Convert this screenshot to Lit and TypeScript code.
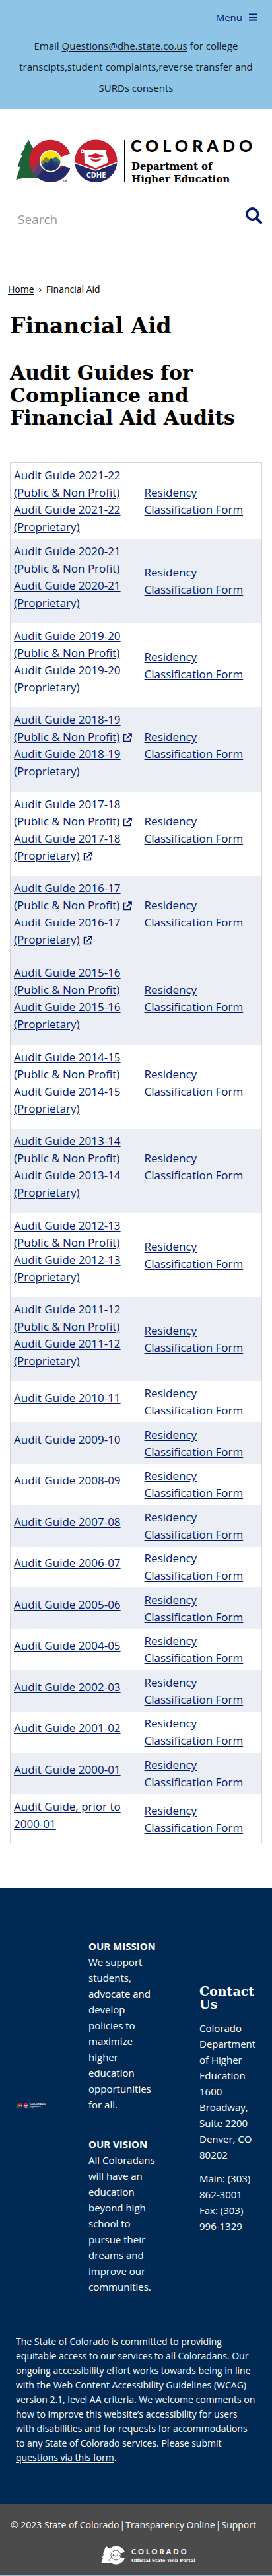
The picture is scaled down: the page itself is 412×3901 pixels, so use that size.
import { LitElement, html, css, svg, nothing } from "lit";
import { customElement } from "lit/decorators.js";

interface GuideRow {
  year: string;
  /** Number of links that lead off the site, counted from the first. */
  external?: number;
  raised?: boolean;
}

const detailedRows: GuideRow[] = [
  { year: "2021-22" },
  { year: "2020-21" },
  { year: "2019-20" },
  { year: "2018-19", external: 1, raised: true },
  { year: "2017-18", external: 2, raised: true },
  { year: "2016-17", external: 2, raised: true },
  { year: "2015-16", raised: true },
  { year: "2014-15", raised: true },
  { year: "2013-14", raised: true },
  { year: "2012-13" },
  { year: "2011-12" },
];

const shadedYears = new Set([
  "2020-21", "2018-19", "2016-17", "2015-16", "2013-14", "2011-12",
  "2009-10", "2007-08", "2005-06", "2002-03", "2000-01",
]);

const simpleYears = [
  "2010-11", "2009-10", "2008-09", "2007-08", "2006-07",
  "2005-06", "2004-05", "2002-03", "2001-02", "2000-01",
];

const externalIcon = html`<svg class="ext" viewBox="0 0 14 14" role="img" aria-label="external link">
  <path d="M5.500 2.500H1.500V12.500H11.500V8.500" fill="none" stroke="currentColor" stroke-width="1.500" />
  <path d="M8 1.200H13V6.200M12.600 1.600L5.500 8.600" fill="none" stroke="currentColor" stroke-width="1.700" />
</svg>`;

const treePath =
  "M19.500 1L12.300 11.700L14 12L7 23.500L10.300 23L5 34L3 42.500L6.700 41.300L0.300 61C14 57 26 59 38 59L36 20L25 12Z";
const cPath =
  "M82.300 21.500A32 32 0 1 0 82.300 44L66.500 38.500A15 15 0 1 1 66.500 27Z";

const stateMark = svg`
  <clipPath id="c-shape"><path d=${cPath} /></clipPath>
  <clipPath id="c-core"><circle cx="52.700" cy="32.700" r="14.800" /></clipPath>
  <path d=${treePath} fill="#1f6238" />
  <path d=${cPath} fill="#c8202f" />
  <g clip-path="url(#c-shape)">
    <path d="M20 58L36 37L42 42L54 50L90 32V70H20Z" fill="#232a68" />
    <path d="M18 52L36 32L40 36L23 57Z" fill="#7e3b5c" />
    <path d="M23 57L40 36L44 42L29 61Z" fill="#4e4275" />
  </g>
  <circle cx="52.700" cy="32.700" r="16.800" fill="#fff" />
  <g clip-path="url(#c-core)">
    <path d="M36 16H70V50H36Z" fill="#fde100" />
    <path d="M36 37L46 26L53 33L60 26L70 36V50H36Z" fill="#82883a" />
    <path d="M54 31L60.500 26L70 36V42H60Z" fill="#35697c" />
    <path d="M36 42L45 34L48 36L53.500 28L59 35L61 33L70 42V50H36Z" fill="#1d3f75" />
    <path d="M38 47L53 36L68 47V50H38Z" fill="#232a68" />
  </g>`;

const agencyLogo = (ink: string, trademark = false) => html`<svg class="agency" viewBox="0 0 364 67" role="img" aria-label="Colorado Department of Higher Education">
  ${stateMark}
  ${trademark
    ? svg`<text x="71" y="64" font-family="Lato, sans-serif" font-size="4" font-weight="700" fill=${ink}>TM</text>`
    : nothing}
  <clipPath id="badge"><circle cx="121.300" cy="32.700" r="32.200" /></clipPath>
  <g clip-path="url(#badge)">
    <path d="M88 0H154V66H88Z" fill="#c8202f" />
    <path d="M88 35L121 47L155 34V66H88Z" fill="#232a68" />
    <path d="M88 35.500L121 47L155 34.500" fill="none" stroke="#fff" stroke-width="1.600" />
  </g>
  <path d="M102 16H137.500L136.500 20L140.500 35L121 43.500L104 36L103.500 20Z" fill="#fff" />
  <circle cx="101" cy="17.700" r="2" fill="none" stroke="#fff" stroke-width="1.200" />
  <path d="M108.500 25L121 21L133.500 25L121 29Z" fill="#c8202f" />
  <path d="M113.500 29C118 31 124 31 128.500 29V31C126 35 116 35 113.500 31Z" fill="#c8202f" />
  <text x="121.500" y="58" text-anchor="middle" font-family="'Noto Sans', sans-serif" font-size="11" font-weight="700" fill="#fff">CDHE</text>
  <path d="M164.500 1V65" stroke=${ink} stroke-width="1" />
  <text x="174" y="19" font-family="Lato, sans-serif" font-size="25" font-weight="900" letter-spacing="6" fill=${ink}>COLORADO</text>
  <text x="175" y="46" font-family="'DejaVu Serif', serif" font-size="15" font-weight="700" fill=${ink}>Department of</text>
  <text x="175" y="65" font-family="'DejaVu Serif', serif" font-size="15" font-weight="700" fill=${ink}>Higher Education</text>
</svg>`;

const portalLogo = html`<svg class="portal" viewBox="0 0 136 29" role="img" aria-label="Colorado Official State Web Portal">
  <path d="M8 1L5 6L6 6L3 12L4.500 12L1 19L3 19L0 27L14 26V5Z" fill="#fff" />
  <path d="M36 9.500A14 14 0 1 0 36 19.500L29 17A7 7 0 1 1 29 12Z" fill="#fff" />
  <circle cx="22.500" cy="14.500" r="7.500" fill="#fff" stroke="#4b4b4b" stroke-width="0.800" />
  <path d="M11 24L19 13L22.500 17L26 12L30 16M16 17L20 13" fill="none" stroke="#4b4b4b" stroke-width="0.800" />
  <path d="M42.500 1V28" stroke="#888" stroke-width="1" />
  <text x="46" y="13" font-family="Lato, sans-serif" font-size="11" font-weight="900" letter-spacing="3" fill="#fff">COLORADO</text>
  <text x="46" y="25" font-family="'DejaVu Serif', serif" font-size="7" font-weight="700" fill="#fff">Official State Web Portal</text>
</svg>`;

@customElement("app-root")
export class AppRoot extends LitElement {
  static styles = css`
    :host {
      display: block;
      background: #fff;
      color: #000;
      font: 16px/24px "Trebuchet MS", "Open Sans", "Noto Sans", sans-serif;
    }
    a { color: inherit; text-underline-offset: 2px; }
    p, h1, h2, h3 { margin: 0; }
    h1, h2, h3 { font-family: "DejaVu Serif", serif; font-weight: 700; }

    .notice { background: #8ec5e6; padding: 10px 20px 16px; }
    .menu-row { display: flex; justify-content: flex-end; }
    .menu {
      display: flex; align-items: center; gap: 10px;
      border: 0; background: none; padding: 0 3px;
      font: inherit; font-size: 15px; line-height: 32px; color: #001970;
    }
    .menu svg { width: 12px; height: 12px; }
    .notice p { padding: 11px 0 0; line-height: 32px; text-align: center; color: #0b1b2b; font-size: 15px; }

    .brand { padding: 46px 24px 0; }
    .agency { display: block; width: 100%; overflow: visible; }
    .search { display: flex; align-items: flex-start; padding: 36px 15px 0 25px; }
    .search input {
      flex: 1; min-width: 0; border: 0; padding: 4px 2px; background: none;
      font: inherit; font-size: 19px; line-height: 28px; color: #333;
    }
    .search input::placeholder { color: #999; opacity: 1; }
    .search button { border: 0; background: none; padding: 0; color: #001970; }
    .search svg { display: block; width: 25px; height: 25px; }

    .crumbs { display: flex; gap: 7px; padding: 76px 12px 0; font-size: 14px; }
    main { display: block; padding: 0 15px; }
    h1 { margin-top: 22px; font-size: 33px; line-height: 44px; }
    h2 { margin-top: 32px; font-size: 30px; line-height: 34px; }

    table {
      width: 100%; margin-top: 50px; table-layout: fixed;
      border: 1px solid #d3d6da; border-spacing: 0;
    }
    .first { width: 52%; }
    td { padding: 6px 5px 5px; font-size: 17px; line-height: 26px; color: #001970; vertical-align: middle; }
    .shaded td { background: #ebeff5; }
    .tall.shaded td { padding-bottom: 6px; }
    .short:not(.shaded) td { padding-top: 5px; }
    .gap { margin-bottom: 12px; }
    .ext { width: 14px; height: 14px; margin-left: 5px; vertical-align: -2px; }

    footer { margin-top: 66px; background: #002a54; color: #fff; }
    .columns {
      display: grid; grid-template-columns: 46px 1fr 86px;
      margin: 0 24px; padding: 76px 0 35px; border-bottom: 1px solid #fff;
      align-items: center;
    }
    .columns .agency { padding-bottom: 32px; }
    .texts { padding: 0 64px; font-size: 15px; }
    .texts p + p { margin-top: 36px; }
    .contact { padding-bottom: 22px; font-size: 15px; }
    .contact h3 { font-size: 19px; line-height: 20px; margin-bottom: 14px; }
    .contact p + p { margin-top: 12px; }
    .statement { padding: 24px 24px 59px; font-size: 14px; line-height: 22px; }
    .legal {
      background: #4b4b4b; padding: 20px 16px 15px; font-size: 14px;
      border-bottom: 2px solid #8ec5e6;
    }
    .legal-links { display: flex; justify-content: space-between; margin-right: 8px; }
    .portal-row { display: flex; justify-content: center; padding: 19px 0 0 30px; }
    .portal { display: block; width: 136px; height: 29px; overflow: visible; }
  `;

  private renderDetailed(row: GuideRow, first: boolean) {
    const external = row.external ?? 0;
    return html`<tr class="tall ${shadedYears.has(row.year) ? "shaded" : ""}">
      <td>
        <p class=${first ? "" : "gap"}>
          <a href="#">Audit Guide ${row.year}<br />(Public &amp; Non Profit)</a>${external > 0 ? externalIcon : nothing}<br />
          <a href="#">Audit Guide ${row.year}<br />(Proprietary)</a>${external > 1 ? externalIcon : nothing}
        </p>
      </td>
      <td><p class=${row.raised ? "gap" : ""}>${this.residencyLink}</p></td>
    </tr>`;
  }

  private residencyLink = html`<a href="#">Residency<br />Classification Form</a>`;

  render() {
    return html`
      <div class="notice">
        <div class="menu-row">
          <button class="menu" type="button">
            Menu
            <svg viewBox="0 0 12 12" aria-hidden="true"><path d="M0 1.500H12M0 6H12M0 10.500H12" stroke="currentColor" stroke-width="2" /></svg>
          </button>
        </div>
        <p>Email <a href="mailto:Questions@dhe.state.co.us">Questions@dhe.state.co.us</a> for college transcipts,student complaints,reverse transfer and SURDs consents</p>
      </div>

      <header>
        <div class="brand">${agencyLogo("#000", true)}</div>
        <form class="search" role="search">
          <input type="search" placeholder="Search" aria-label="Search" />
          <button type="button" aria-label="Search">
            <svg viewBox="0 0 25 25"><circle cx="10.300" cy="10.200" r="8.300" fill="none" stroke="currentColor" stroke-width="3.600" /><path d="M16.500 16.500L23.200 23.100" stroke="currentColor" stroke-width="4" stroke-linecap="round" /></svg>
          </button>
        </form>
      </header>

      <nav class="crumbs" aria-label="Breadcrumb">
        <a href="#">Home</a><span>›</span><span>Financial Aid</span>
      </nav>

      <main>
        <h1>Financial Aid</h1>
        <h2>Audit Guides for Compliance and Financial Aid Audits</h2>
        <table>
          <colgroup><col class="first" /><col /></colgroup>
          <tbody>
            ${detailedRows.map((row, i) => this.renderDetailed(row, i === 0))}
            ${simpleYears.map(
              (year) => html`<tr class="short ${shadedYears.has(year) ? "shaded" : ""}">
                <td><p class="gap"><a href="#">Audit Guide ${year}</a></p></td>
                <td>${this.residencyLink}</td>
              </tr>`
            )}
            <tr>
              <td><p class="gap"><a href="#">Audit Guide, prior to<br />2000-01</a></p></td>
              <td>${this.residencyLink}</td>
            </tr>
          </tbody>
        </table>
      </main>

      <footer>
        <div class="columns">
          ${agencyLogo("#fff")}
          <div class="texts">
            <p><strong>OUR MISSION</strong><br />We support students, advocate and develop policies to maximize higher education opportunities for all.</p>
            <p><strong>OUR VISION</strong><br />All Coloradans will have an education beyond high school to pursue their dreams and improve our communities.</p>
          </div>
          <div class="contact">
            <h3>Contact Us</h3>
            <p>Colorado Department of Higher Education<br />1600 Broadway, Suite 2200<br />Denver, CO 80202</p>
            <p>Main: (303) 862-3001<br />Fax: (303) 996-1329</p>
          </div>
        </div>
        <p class="statement">The State of Colorado is committed to providing equitable access to our services to all Coloradans. Our ongoing accessibility effort works towards being in line with the Web Content Accessibility Guidelines (WCAG) version 2.1, level AA criteria. We welcome comments on how to improve this website’s accessibility for users with disabilities and for requests for accommodations to any State of Colorado services. Please submit <a href="#">questions via this form</a>.</p>
        <div class="legal">
          <div class="legal-links">
            <span>© 2023 State of Colorado</span><span>|</span><a href="#">Transparency Online</a><span>|</span><a href="#">Support</a>
          </div>
          <div class="portal-row">${portalLogo}</div>
        </div>
      </footer>
    `;
  }
}
